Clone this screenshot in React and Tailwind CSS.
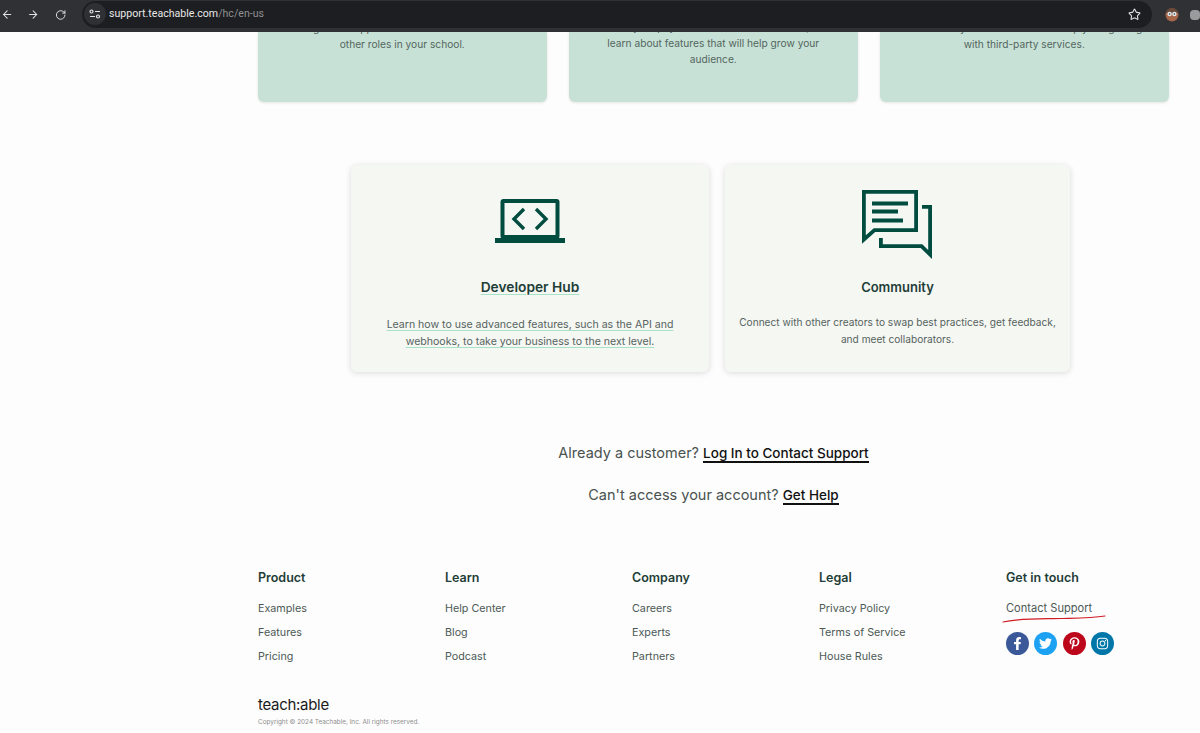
import React from "react";
import { ArrowLeft, ArrowRight, RotateCw, Star } from "lucide-react";
import { FaFacebookF, FaTwitter, FaPinterestP, FaInstagram } from "react-icons/fa";

const columns = [
  { title: "Product", links: ["Examples", "Features", "Pricing"] },
  { title: "Learn", links: ["Help Center", "Blog", "Podcast"] },
  { title: "Company", links: ["Careers", "Experts", "Partners"] },
  { title: "Legal", links: ["Privacy Policy", "Terms of Service", "House Rules"] },
];

function TopCard({ lines, pb }) {
  return (
    <div className={`w-[288.5px] h-[70px] overflow-hidden flex flex-col justify-end items-center bg-[#c7e1d6] rounded-b-md shadow-[0_1px_3px_rgba(0,0,0,0.1)] text-[10.2px] leading-[16px] text-[#54665f] text-center ${pb}`}>
      {lines.map((l) => (
        <div key={l} className="whitespace-nowrap">{l}</div>
      ))}
    </div>
  );
}

function Laptop() {
  return (
    <svg width="70" height="45" viewBox="495 199 70 45" fill="none" stroke="#004d40">
      <rect x="502.5" y="201" width="55" height="36" rx="1" strokeWidth="4" />
      <rect x="495" y="238" width="70" height="5" fill="#004d40" stroke="none" />
      <path d="M524 209l-10 10 10 10M536 209l10 10-10 10" strokeWidth="3.4" />
    </svg>
  );
}

function Chat() {
  return (
    <svg width="71" height="69" viewBox="862 190 71 69" fill="none" stroke="#004d40" strokeWidth="3.8">
      <path d="M863.9 191.9H916.1V230.1H874.5L863.9 239.5Z" />
      <path d="M872 203.5H908M872 211.5H898M872 220.5H903" />
      <path d="M922 206.9H930.1V254.5L921.5 246.1H880.9V238" />
    </svg>
  );
}

function Avatar() {
  return (
    <svg width="14" height="14" viewBox="0 0 14 14">
      <circle cx="7" cy="7" r="6.5" fill="#a8674a" />
      <path d="M1 5a6 5 0 0 1 12 0z" fill="#6b4a3a" />
      <circle cx="4.6" cy="6" r="2.2" fill="#dfeaea" />
      <circle cx="9.4" cy="6" r="2.2" fill="#dfeaea" />
      <circle cx="4.6" cy="6" r="0.8" fill="#333" />
      <circle cx="9.4" cy="6" r="0.8" fill="#333" />
    </svg>
  );
}

export default function App() {
  return (
    <div className="w-[1200px] h-[733px] overflow-hidden flex flex-col bg-[#fdfdfd] font-['Inter','Liberation_Sans',sans-serif]">
      <header className="h-[32px] shrink-0 flex items-center bg-[#303134] relative z-10">
        <ArrowLeft className="w-[13px] h-[13px] ml-[1px] -mt-[3px] text-[#e3e3e3]" strokeWidth={2} />
        <ArrowRight className="w-[13px] h-[13px] ml-[14px] -mt-[3px] text-[#e3e3e3]" strokeWidth={2} />
        <RotateCw className="w-[12px] h-[12px] ml-[15px] -mt-[3px] text-[#e3e3e3]" strokeWidth={2} />
        <div className="ml-[16px] w-[1070px] h-[27px] -mt-[4px] bg-[#1d1e21] rounded-full flex items-center shrink-0">
          <div className="ml-[2px] w-[22px] h-[22px] rounded-full bg-[#2f3033] flex items-center justify-center">
            <svg width="12" height="10" viewBox="0 0 12 10" fill="none" stroke="#e3e3e3" strokeWidth="1.2">
              <circle cx="2.5" cy="2.5" r="1.5" />
              <path d="M6 2.5h5M1 7.5h5" />
              <circle cx="9" cy="7.5" r="1.5" />
            </svg>
          </div>
          <div className="ml-[3px] text-[10.6px] font-['Roboto',sans-serif] text-[#e8e8e8]">
            support.teachable.com<span className="text-[#8f9193]">/hc/en-us</span>
          </div>
          <Star className="ml-auto mr-[11px] w-[13px] h-[13px] text-[#e3e3e3]" strokeWidth={2} />
        </div>
        <div className="ml-[13px] -mt-[3px] shrink-0"><Avatar /></div>
        <div className="ml-[11px] -mt-[3px] w-[10px] h-[10px] rounded-sm bg-[#9a9b9d] shrink-0"></div>
      </header>

      <main className="w-[911px] ml-[258px] flex-1 flex flex-col">
        <section className="flex gap-[22.5px]">
          <TopCard pb="pb-[50px]" lines={["Manage and support all authors and admins and", "other roles in your school."]} />
          <TopCard pb="pb-[35px]" lines={["Collect your payment and share with others, and", "learn about features that will help grow your", "audience."]} />
          <TopCard pb="pb-[50px]" lines={["Customize your site's look and simply integrating", "with third-party services."]} />
        </section>

        <section className="mt-[63px] ml-[93px] flex gap-[16px]">
          <div className="w-[358px] h-[207px] flex flex-col items-center bg-[#f5f7f3] rounded-md shadow-[0_1px_6px_rgba(0,0,0,0.14)] text-center pt-[34px]">
            <Laptop />
            <h3 className="mt-[33px] text-[13.75px] leading-[20px] font-semibold text-[#1f3e37] underline decoration-[#a9e0c8] underline-offset-2">Developer Hub</h3>
            <p className="mt-[19px] text-[10.55px] leading-[17px] text-[#56635e] underline decoration-[#a9e0c8] underline-offset-2">
              Learn how to use advanced features, such as the API and<br />webhooks, to take your business to the next level.
            </p>
          </div>
          <div className="w-[345px] h-[207px] flex flex-col items-center bg-[#f5f7f3] rounded-md shadow-[0_1px_6px_rgba(0,0,0,0.14)] text-center pt-[25px]">
            <Chat />
            <h3 className="mt-[18px] text-[13px] leading-[20px] font-semibold text-[#1f3e37]">Community</h3>
            <p className="mt-[17px] text-[10.15px] leading-[16.5px] text-[#56635e] whitespace-nowrap">
              Connect with other creators to swap best practices, get feedback,<br />and meet collaborators.
            </p>
          </div>
        </section>

        <section className="mt-[70px] flex flex-col items-center gap-[20px] text-[14.5px] leading-[21px] text-[#49524f]">
          <p>Already a customer? <a className="text-[13.5px] font-medium text-[#111] border-b-2 border-[#111]">Log In to Contact Support</a></p>
          <p>Can't access your account? <a className="text-[13.5px] font-medium text-[#111] border-b-2 border-[#111]">Get Help</a></p>
        </section>

        <footer className="mt-[63px] w-[935px] grid grid-cols-5">
          {columns.map((c) => (
            <div key={c.title}>
              <h4 className="text-[12.5px] leading-[18px] font-semibold text-[#1f3e37]">{c.title}</h4>
              <ul className="mt-[13px] flex flex-col gap-[6.5px] text-[10.75px] leading-[17.5px] text-[#4c5955]">
                {c.links.map((l) => <li key={l}>{l}</li>)}
              </ul>
            </div>
          ))}
          <div className="relative">
            <h4 className="text-[12.5px] leading-[18px] font-semibold text-[#1f3e37]">Get in touch</h4>
            <div className="mt-[13px] text-[11.1px] leading-[17.5px] text-[#4c5955]">Contact Support</div>
            <svg className="absolute left-[-4px] top-[44px]" width="110" height="12" viewBox="0 0 110 12" fill="none">
              <path d="M1 9C20 5 40 6 60 5.5S90 5 103 3" stroke="#d01c24" strokeWidth="1.2" strokeLinecap="round" />
            </svg>
            <div className="mt-[14px] flex gap-[5.3px]">
              <span className="w-[23px] h-[23px] rounded-full bg-[#3b5998] flex items-center justify-center text-white text-[13px]"><FaFacebookF /></span>
              <span className="w-[23px] h-[23px] rounded-full bg-[#1da1f2] flex items-center justify-center text-white text-[13px]"><FaTwitter /></span>
              <span className="w-[23px] h-[23px] rounded-full bg-[#bd081c] flex items-center justify-center text-white text-[13px]"><FaPinterestP /></span>
              <span className="w-[23px] h-[23px] rounded-full bg-[#0077a8] flex items-center justify-center text-white text-[13px]"><FaInstagram /></span>
            </div>
          </div>
        </footer>

        <div className="mt-[29px]">
          <div className="text-[15px] leading-[20px] tracking-[-0.3px] text-[#1a1a1a]">teach:able</div>
          <div className="mt-[2px] text-[6.4px] leading-[10px] text-[#8f8f8f]">Copyright © 2024 Teachable, Inc. All rights reserved.</div>
        </div>
      </main>
    </div>
  );
}
